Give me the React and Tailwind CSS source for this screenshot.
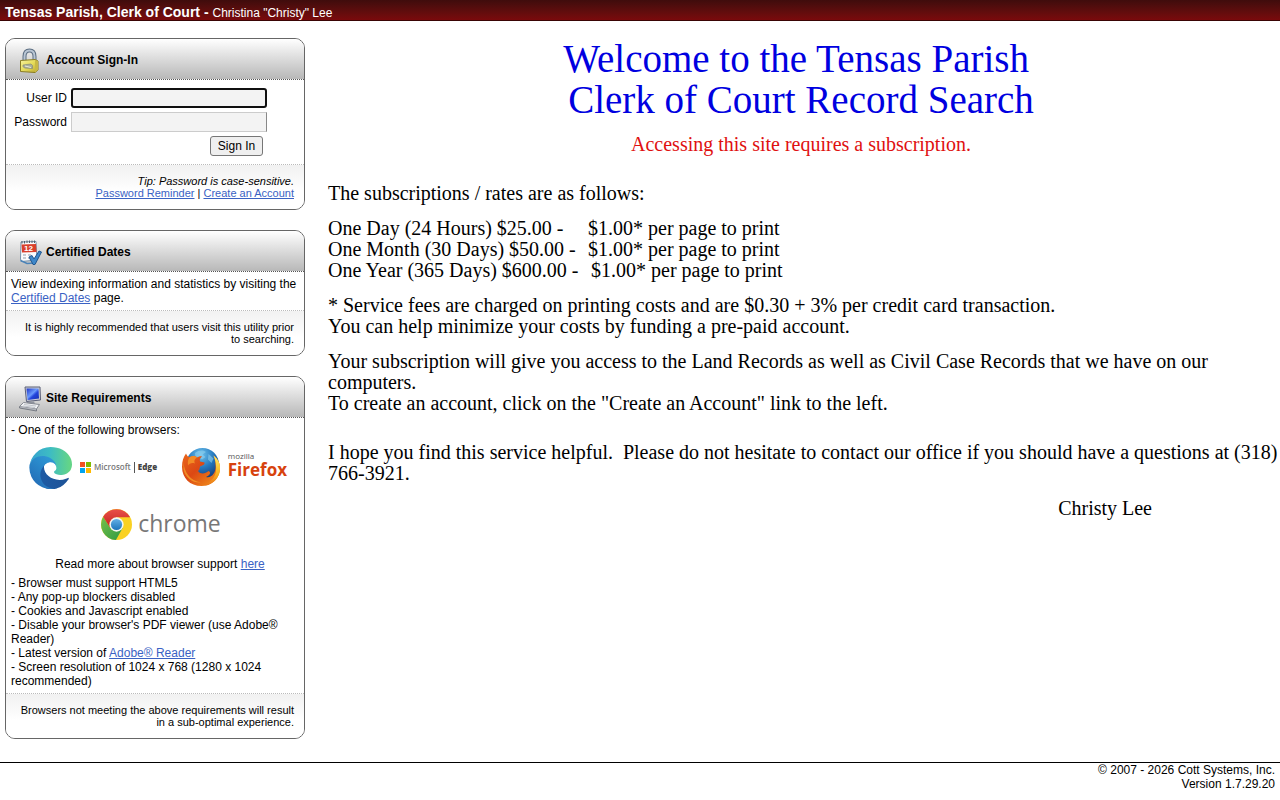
import { useState } from "react";

const linkClass = "text-[#3a62c4] underline";

const requirements = [
  "Browser must support HTML5",
  "Any pop-up blockers disabled",
  "Cookies and Javascript enabled",
  "Disable your browser's PDF viewer (use Adobe® Reader)",
];

const rates = [
  { plan: "One Day (24 Hours) $25.00 -", gap: "w-[260px]" },
  { plan: "One Month (30 Days) $50.00 -", gap: "w-[260px]" },
  { plan: "One Year (365 Days) $600.00 -", gap: "w-[263px]" },
];

function LockIcon() {
  return (
    <svg width="24" height="26" viewBox="0 0 24 26" aria-hidden="true">
      <defs>
        <linearGradient id="lockBody" x1="0" y1="0" x2="1" y2="1">
          <stop offset="0" stopColor="#f6f2a0" />
          <stop offset="0.5" stopColor="#e6dc5a" />
          <stop offset="1" stopColor="#b9a52c" />
        </linearGradient>
      </defs>
      <path d="M6.500 13V8.500C6.500 4.500 8.500 2.500 11.500 2.500S16.500 4.500 16.500 8.500V13" fill="none" stroke="#5d6f83" strokeWidth="4" />
      <path d="M6.500 13V8.500C6.500 4.500 8.500 2.500 11.500 2.500S16.500 4.500 16.500 8.500V13" fill="none" stroke="#b9c6d4" strokeWidth="2" />
      <path d="M2.500 12.500L17 11.500L20 13V22L17 24.500L2.500 23.500Z" fill="url(#lockBody)" stroke="#8a7d25" />
      <path d="M17 12V24.500L20 22V13Z" fill="#c9b945" />
      <path d="M5 17L13 16L14.500 17.500V20.500L6.500 20L5 18.500Z" fill="#a9ae9a" stroke="#858a78" strokeWidth="0.700" />
      <path d="M7 18L13 19.500" stroke="#e8ead8" />
    </svg>
  );
}

function CalendarIcon() {
  return (
    <svg width="24" height="26" viewBox="0 0 24 26" aria-hidden="true">
      <path d="M3 2L18 1.500L19 20L3.500 21.500L2.500 19Z" fill="#fbfcfd" stroke="#7790a8" />
      <path d="M2.500 20.500L9 23.500L17 23" fill="none" stroke="#4a83b8" strokeWidth="1.500" />
      <path d="M3.500 4.500L18 4L18.500 12L4 12.500Z" fill="#d9402c" />
      <path d="M4 1v2.500M6.500 1v2.500M9 0.500v2.500M11.500 0.500v2.500M14 0.500v2.500M16.500 0.500v2.500" stroke="#52606d" />
      <text x="6" y="11" fontSize="8" fontWeight="bold" fill="#fff" fontFamily="Liberation Sans, sans-serif">12</text>
      <path d="M5 15h3M10 15h3M5 18h3M10 18h2" stroke="#b5bcc5" strokeWidth="1.500" />
      <path d="M11 17L14 15.500L16 19L21 11L23.500 12L17 24.500H15Z" fill="#3e87c9" stroke="#21578f" />
    </svg>
  );
}

function ComputerIcon() {
  return (
    <svg width="24" height="26" viewBox="0 0 24 26" aria-hidden="true">
      <defs>
        <linearGradient id="screen" x1="0" y1="0" x2="1" y2="1">
          <stop offset="0" stopColor="#1f35c9" />
          <stop offset="0.450" stopColor="#6b9afc" />
          <stop offset="0.600" stopColor="#2344dc" />
          <stop offset="1" stopColor="#1930ae" />
        </linearGradient>
      </defs>
      <path d="M7 1L22 1L22.500 14L8.500 15.500Z" fill="#c9ccd6" stroke="#5b6078" />
      <path d="M8.500 2.500L20.500 2.500L21 12.500L9.500 14Z" fill="url(#screen)" />
      <path d="M9 16L16 15.500L17 18L8 18Z" fill="#8e929c" />
      <path d="M5.500 16.500L21.500 18.500L18.500 23L1.500 20.500Z" fill="#f1f2f4" stroke="#858992" />
      <path d="M6 18.500L18 20M5 20L17 21.500" stroke="#c0c4cb" />
      <path d="M1.500 20.500V22L18.500 25V23" fill="#b2b5bc" stroke="#777b83" />
    </svg>
  );
}

function EdgeLogo() {
  return (
    <svg width="43" height="43" viewBox="0 0 256 256" aria-hidden="true">
      <defs>
        <linearGradient id="edgeBase" x1="60" y1="177" x2="241" y2="177" gradientUnits="userSpaceOnUse">
          <stop offset="0" stopColor="#1d5ba5" />
          <stop offset="1" stopColor="#1e5296" />
        </linearGradient>
        <linearGradient id="edgeLeft" x1="150" y1="100" x2="45" y2="230" gradientUnits="userSpaceOnUse">
          <stop offset="0" stopColor="#2f95d3" />
          <stop offset="0.300" stopColor="#2a8bcc" />
          <stop offset="1" stopColor="#2470b9" />
        </linearGradient>
        <linearGradient id="edgeTop" x1="10" y1="100" x2="240" y2="100" gradientUnits="userSpaceOnUse">
          <stop offset="0" stopColor="#36a3d0" />
          <stop offset="0.500" stopColor="#3dbcc3" />
          <stop offset="1" stopColor="#63d488" />
        </linearGradient>
      </defs>
      <path fill="url(#edgeBase)" d="M231 190c-4 2-7 4-11 5a108 108 0 0 1-38 7c-50 0-93-34-93-78a33 33 0 0 1 17-29c-45 2-57 49-57 77 0 78 72 86 88 86 8 0 21-3 29-5l1-1a128 128 0 0 0 67-53 4 4 0 0 0-3-9z" />
      <path fill="url(#edgeLeft)" d="M106 241a79 79 0 0 1-23-21 81 81 0 0 1 29-120c4-1 9-4 17-4a34 34 0 0 1 26 13 33 33 0 0 1 7 20c0-1 24-80-80-80-44 0-80 42-80 78a130 130 0 0 0 12 56 128 128 0 0 0 156 66 75 75 0 0 1-64-8z" />
      <path fill="url(#edgeTop)" d="M152 149c-1 1-3 3-3 6 0 3 2 6 5 8 14 10 41 9 41 9a60 60 0 0 0 31-9 61 61 0 0 0 30-53c0-22-8-37-11-43C225 28 182 6 128 6A128 128 0 0 0 2 126c1-37 37-66 80-66 3 0 23 0 42 10 17 9 26 20 32 30 6 11 7 25 7 31s-3 14-11 18z" />
    </svg>
  );
}

function FirefoxLogo() {
  return (
    <svg width="40" height="40" viewBox="0 0 80 80" aria-hidden="true">
      <defs>
        <radialGradient id="ffGlobe" cx="0.450" cy="0.200" r="0.800">
          <stop offset="0" stopColor="#6ec3ee" />
          <stop offset="0.500" stopColor="#2578bd" />
          <stop offset="1" stopColor="#12306e" />
        </radialGradient>
        <linearGradient id="ffFox" x1="0" y1="0" x2="1" y2="1">
          <stop offset="0" stopColor="#e9681c" />
          <stop offset="0.450" stopColor="#dc4814" />
          <stop offset="1" stopColor="#f49a1c" />
        </linearGradient>
        <linearGradient id="ffTail" x1="0" y1="0" x2="0" y2="1">
          <stop offset="0" stopColor="#fff06a" />
          <stop offset="0.600" stopColor="#f9b31f" />
          <stop offset="1" stopColor="#e9731a" />
        </linearGradient>
      </defs>
      <circle cx="43" cy="35" r="33" fill="url(#ffGlobe)" />
      <path d="M28 12C36 5 46 6 50 10L43 15L49 20L42 25L35 20L29 22ZM55 14L65 23L61 32L54 25Z" fill="#8fd1ef" opacity="0.600" />
      <path d="M10 13C12 18 14 20 18 20C23 17 29 18 32 21C36 19 40 18 42 19C38 22 37 25 38 29L47 31C48 35 43 37 38 39C37 43 38 45 34 48C40 56 49 53 55 48C61 50 58 57 50 60C61 63 70 52 69 37C69 29 67 22 65 17C75 25 79 34 78 46C75 66 60 78 41 78C18 78 2 62 2 40C2 28 5 20 10 13Z" fill="url(#ffFox)" />
      <path d="M65 17C75 25 79 34 78 46C76 62 64 75 48 77C60 69 68 61 70 48C71 38 69 26 65 17Z" fill="url(#ffTail)" />
      <path d="M5 31C7 51 18 67 40 71C25 73 8 62 5 44Z" fill="#f6a52b" opacity="0.700" />
      <path d="M18 20C23 17 29 18 32 21C27 24 25 29 28 33C22 31 16 33 14 37C13 29 14 24 18 20Z" fill="#f38b25" />
    </svg>
  );
}

function ChromeLogo() {
  return (
    <svg width="31" height="31" viewBox="0 0 100 100" aria-hidden="true">
      <defs>
        <linearGradient id="crRed" x1="0" y1="0" x2="0" y2="1">
          <stop offset="0" stopColor="#e8504a" />
          <stop offset="1" stopColor="#c5221c" />
        </linearGradient>
        <linearGradient id="crGreen" x1="0" y1="0" x2="1" y2="1">
          <stop offset="0" stopColor="#76c04a" />
          <stop offset="1" stopColor="#2f9a42" />
        </linearGradient>
        <linearGradient id="crBlue" x1="0" y1="0" x2="0" y2="1">
          <stop offset="0" stopColor="#63b0e6" />
          <stop offset="1" stopColor="#1c74bb" />
        </linearGradient>
      </defs>
      <circle cx="50" cy="50" r="50" fill="#fad122" />
      <path d="M50 50L30 61L7 25A50 50 0 0 0 48 100L70 61Z" fill="url(#crGreen)" />
      <path d="M7 25A50 50 0 0 1 94 27H50L30 61Z" fill="url(#crRed)" />
      <circle cx="50" cy="50" r="23" fill="#f5f5f2" />
      <circle cx="50" cy="50" r="18" fill="url(#crBlue)" />
    </svg>
  );
}

function Panel({ icon, title, footer, children }) {
  return (
    <section className="overflow-hidden rounded-[10px] border border-[#666] bg-white">
      <div className="flex h-[41px] items-center gap-1 border-b border-dotted border-[#555] bg-linear-to-b from-white to-[#b8b8b8] pt-1 pl-3">
        {icon}
        <h2 className="pb-[2px] text-xs font-bold">{title}</h2>
      </div>
      {children}
      <div className="border-t border-dotted border-[#bbb] bg-linear-to-b from-[#f1f1f1] to-white to-60% py-[10px] pr-[10px] pl-3 text-right text-[11px] leading-3">
        {footer}
      </div>
    </section>
  );
}

function SignIn() {
  const [userId, setUserId] = useState("");
  const [password, setPassword] = useState("");

  return (
    <Panel
      icon={<LockIcon />}
      title="Account Sign-In"
      footer={
        <>
          <em className="block">Tip: Password is case-sensitive.</em>
          <a href="#reminder" className={linkClass}>Password Reminder</a> | <a href="#create" className={linkClass}>Create an Account</a>
        </>
      }
    >
      <form onSubmit={(e) => e.preventDefault()} className="grid grid-cols-[56px_196px] items-center gap-1 px-[5px] py-2">
        <label htmlFor="userId" className="text-right">User ID</label>
        <input
          id="userId"
          type="text"
          value={userId}
          onChange={(e) => setUserId(e.target.value)}
          className="h-5 rounded-[3px] border-2 border-[#101010] bg-[#f3f3f3] px-1 outline-none"
        />
        <label htmlFor="password" className="text-right">Password</label>
        <input
          id="password"
          type="password"
          value={password}
          onChange={(e) => setPassword(e.target.value)}
          className="h-5 border border-[#ccc] border-r-[#888] bg-[#f3f3f3] px-1 outline-none"
        />
        <button type="submit" className="col-start-2 mr-1 h-5 w-[53px] justify-self-end rounded-[3px] border border-[#767676] bg-[#efefef]">
          Sign In
        </button>
      </form>
    </Panel>
  );
}

function CertifiedDates() {
  return (
    <Panel
      icon={<CalendarIcon />}
      title="Certified Dates"
      footer="It is highly recommended that users visit this utility prior to searching."
    >
      <p className="p-[5px]">
        View indexing information and statistics by visiting the <a href="#dates" className={linkClass}>Certified Dates</a> page.
      </p>
    </Panel>
  );
}

function SiteRequirements() {
  return (
    <Panel
      icon={<ComputerIcon />}
      title="Site Requirements"
      footer="Browsers not meeting the above requirements will result in a sub-optimal experience."
    >
      <div className="p-[5px]">
        <p>- One of the following browsers:</p>
        <div className="flex h-[60px] items-center justify-between pr-3 pl-[18px]">
          <div className="flex items-center gap-2">
            <EdgeLogo />
            <div className="flex items-center gap-[3px] font-['Open_Sans',sans-serif] text-[8px] font-semibold text-[#777]">
              <svg width="11" height="11" viewBox="0 0 11 11" aria-hidden="true">
                <path d="M0 0h5v5H0z" fill="#f25022" />
                <path d="M6 0h5v5H6z" fill="#7fba00" />
                <path d="M0 6h5v5H0z" fill="#00a4ef" />
                <path d="M6 6h5v5H6z" fill="#ffb900" />
              </svg>
              <span>Microsoft</span>
              <span className="h-[11px] w-px bg-[#555]" />
              <b className="text-[#444]">Edge</b>
            </div>
          </div>
          <div className="flex items-center gap-[7px] font-['Open_Sans',sans-serif]">
            <FirefoxLogo />
            <div className="pb-1">
              <div className="text-[8px] leading-[10px] text-[#555]">mozilla</div>
              <div className="text-[17px] leading-[18px] font-bold text-[#d7420e]">Firefox</div>
            </div>
          </div>
        </div>
        <div className="flex h-[54px] items-center justify-center gap-[6px] pl-3">
          <ChromeLogo />
          <span className="pb-[2px] font-['Open_Sans',sans-serif] text-[23px] text-[#777]">chrome</span>
        </div>
        <p className="mt-[6px] mb-[5px] pl-[10px] text-center">
          Read more about browser support <a href="#support" className={linkClass}>here</a>
        </p>
        <ul>
          {requirements.map((r) => (
            <li key={r}>- {r}</li>
          ))}
          <li>- Latest version of <a href="#reader" className={linkClass}>Adobe® Reader</a></li>
          <li>- Screen resolution of 1024 x 768 (1280 x 1024 recommended)</li>
        </ul>
      </div>
    </Panel>
  );
}

function Welcome() {
  return (
    <main className="flex min-w-0 flex-1 flex-col gap-[14px] font-['Liberation_Serif',serif] text-[20px] leading-[21px]">
      <h1 className="pr-[6px] text-center text-[39px] leading-[41px] text-[#0000e0]">
        Welcome to the Tensas Parish&nbsp;
        <br />
        Clerk of Court Record Search
      </h1>
      <p className="mb-[14px] pr-[6px] text-center text-[#e01010]">Accessing this site requires a subscription.</p>
      <p>The subscriptions / rates are as follows:</p>
      <div>
        {rates.map((r) => (
          <div key={r.plan} className="flex">
            <span className={r.gap}>{r.plan}</span>
            <span>$1.00* per page to print</span>
          </div>
        ))}
      </div>
      <p>
        * Service fees are charged on printing costs and are $0.30 + 3% per credit card transaction.
        <br />
        You can help minimize your costs by funding a pre-paid account.
      </p>
      <p className="mb-[14px]">
        Your subscription will give you access to the Land Records as well as Civil Case Records that we have on our computers.
        <br />
        To create an account, click on the "Create an Account" link to the left.
      </p>
      <p>
        I hope you find this service helpful.&nbsp; Please do not hesitate to contact our office if you should have a questions at (318) 766-3921.
      </p>
      <p className="pr-32 text-right">Christy Lee</p>
    </main>
  );
}

export default function App() {
  return (
    <div className="bg-white font-['Liberation_Sans',Arial,sans-serif] text-xs leading-[14px] text-black">
      <header className="h-[21px] border-b border-[#3a0505] bg-linear-to-b from-[#3f0c0c] to-[#7a0a0c] px-[5px] pt-1 text-white">
        <b className="text-sm leading-4">Tensas Parish, Clerk of Court - </b>
        Christina "Christy" Lee
      </header>
      <div className="flex gap-[23px] pt-[17px] pb-[23px] pl-[5px]">
        <aside className="flex w-[300px] shrink-0 flex-col gap-5">
          <SignIn />
          <CertifiedDates />
          <SiteRequirements />
        </aside>
        <Welcome />
      </div>
      <footer className="border-t border-black px-[5px] text-right">
        © 2007 - 2026 Cott Systems, Inc.
        <br />
        Version 1.7.29.20
      </footer>
    </div>
  );
}
